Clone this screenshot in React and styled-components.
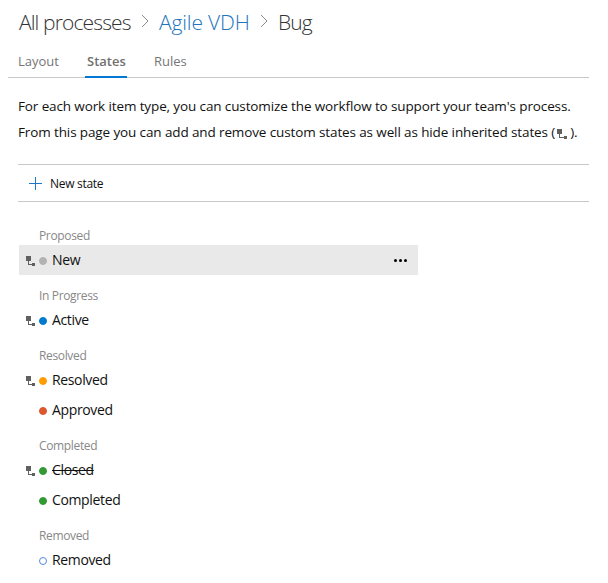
import React from "react";
import styled, { createGlobalStyle } from "styled-components";

const GlobalStyle = createGlobalStyle`
  * { box-sizing: border-box; }
  body { margin: 0; background: #fff; color: #111; font-family: "Open Sans", "Noto Sans", sans-serif; }
`;

const Page = styled.main`
  width: 608px;
  height: 583px;
  padding: 7px 19px 0 8px;
  overflow: hidden;
`;

const Breadcrumb = styled.nav`
  display: flex;
  align-items: center;
  height: 31px;
  padding: 0 0 1px 11px;
  font-size: 21px;
  font-weight: 300;
  line-height: 30px;
  white-space: nowrap;
`;

const Crumb = styled.span`
  width: ${(p) => p.$width}px;
  color: ${(p) => (p.$link ? "#2275bd" : "#333")};
  letter-spacing: ${(p) => p.$tracking}px;
`;

const Chevron = styled.svg`
  display: block;
  flex: none;
  width: 8px;
  height: 14px;
  margin: 0 10px 2px 10px;
`;

const Tabs = styled.div`
  display: flex;
  height: 40px;
  padding-left: 10px;
  border-bottom: 1px solid #c8c8c8;
`;

const Tab = styled.div`
  height: 40px;
  margin-right: ${(p) => p.$gap}px;
  padding: 12px ${(p) => (p.$active ? 2 : 0)}px 0;
  width: ${(p) => p.$width}px;
  border-bottom: ${(p) => (p.$active ? "2px solid #0078d4" : "none")};
  color: ${(p) => (p.$active ? "#707070" : "#767676")};
  font-size: 13px;
  font-weight: ${(p) => (p.$active ? 600 : 400)};
  line-height: 22px;
`;

const Body = styled.section`
  padding-left: 10px;
`;

const Intro = styled.div`
  padding-top: 15px;
  height: 86px;
  font-size: 13.5px;
  line-height: 26px;
  white-space: nowrap;
`;

const Line = styled.div`
  display: flex;
  letter-spacing: ${(p) => p.$tracking}px;
`;

const Toolbar = styled.div`
  display: flex;
  align-items: center;
  height: 38px;
  padding-left: 11px;
  border-top: 1px solid #c8c8c8;
  border-bottom: 1px solid #c8c8c8;
  font-size: 12px;
  letter-spacing: -0.3px;
`;

const Plus = styled.svg`
  width: 13px;
  height: 13px;
  margin-right: 8px;
`;

const StateList = styled.div`
  width: 400px;
  padding: 23px 0 0 1px;
`;

const Group = styled.section`
  margin-bottom: 10px;
`;

const Category = styled.div`
  height: 20px;
  padding-left: 20px;
  color: #888;
  font-size: 12px;
  line-height: 22px;
  letter-spacing: -0.35px;
`;

const StateRow = styled.div`
  display: flex;
  align-items: center;
  height: 30px;
  padding: 0 11px 0 7px;
  background: ${(p) => (p.$selected ? "#e9e9e9" : "transparent")};
`;

const IconSlot = styled.span`
  display: flex;
  width: 13px;
  padding-top: 1px;
`;

const InheritSvg = styled.svg`
  display: block;
  flex: none;
  width: ${(p) => p.$width}px;
  height: 10px;
  margin: ${(p) => p.$margin || 0};
`;

const Dot = styled.span`
  width: 8px;
  height: 8px;
  margin: 2px 5px 0 0;
  border: 1px solid ${(p) => p.$color};
  border-radius: 50%;
  background: ${(p) => (p.$hollow ? "#fff" : p.$color)};
`;

const Name = styled.span`
  flex: 1;
  font-size: 14px;
  line-height: 28px;
  letter-spacing: -0.36px;
`;

const Struck = styled.s`
  text-decoration-thickness: 1px;
`;

const MoreSvg = styled.svg`
  width: 13px;
  height: 3px;
`;

function Inherit({ margin, width = 9 }) {
  const foot = width - 3;
  return (
    <InheritSvg viewBox={`0 0 ${width} 10`} $width={width} $margin={margin} shapeRendering="crispEdges">
      <path d={`M0 0h5v5H0zM${foot} 7h3v3h-3z`} fill="#606060" />
      <path d={`M2 5h1v3h${foot - 3}v1H2z`} fill="#606060" />
    </InheritSvg>
  );
}

function Separator() {
  return (
    <Chevron viewBox="0 0 8 14" fill="none" stroke="#8a8a8a">
      <path d="M1 1l6 6-6 6" />
    </Chevron>
  );
}

const groups = [
  { title: "Proposed", states: [{ name: "New", color: "#b2b2b2", inherited: true, selected: true }] },
  { title: "In Progress", states: [{ name: "Active", color: "#007acc", inherited: true }] },
  {
    title: "Resolved",
    states: [
      { name: "Resolved", color: "#ff9d00", inherited: true },
      { name: "Approved", color: "#dc562e" },
    ],
  },
  {
    title: "Completed",
    states: [
      { name: "Closed", color: "#339933", inherited: true, hidden: true },
      { name: "Completed", color: "#339933" },
    ],
  },
  { title: "Removed", states: [{ name: "Removed", color: "#5688e0", hollow: true }] },
];

export default function App() {
  return (
    <Page>
      <GlobalStyle />
      <Breadcrumb>
        <Crumb $width={112} $tracking={-0.87}>All processes</Crumb>
        <Separator />
        <Crumb $width={91} $tracking={-0.15} $link>Agile VDH</Crumb>
        <Separator />
        <Crumb $width={36} $tracking={-0.9}>Bug</Crumb>
      </Breadcrumb>
      <Tabs>
        <Tab $width={42} $gap={25}>Layout</Tab>
        <Tab $width={42} $gap={27} $active>States</Tab>
        <Tab $width={34} $gap={0}>Rules</Tab>
      </Tabs>
      <Body>
        <Intro>
          <Line $tracking={-0.12}>
            For each work item type, you can customize the workflow to support your team's process.
          </Line>
          <Line $tracking={-0.12}>
            From this page you can add and remove custom states as well as hide inherited states (
            <Inherit width={10} margin="10px 3px 0 2px" />
            ).
          </Line>
        </Intro>
        <Toolbar>
          <Plus viewBox="0 0 13 13" shapeRendering="crispEdges">
            <path d="M6 0h1v13H6zM0 6h13v1H0z" fill="#1a78cc" />
          </Plus>
          New state
        </Toolbar>
        <StateList>
          {groups.map((g) => (
            <Group key={g.title}>
              <Category>{g.title}</Category>
              {g.states.map((s) => (
                <StateRow key={s.name} $selected={s.selected}>
                  <IconSlot>{s.inherited && <Inherit />}</IconSlot>
                  <Dot $color={s.color} $hollow={s.hollow} />
                  <Name>{s.hidden ? <Struck>{s.name}</Struck> : s.name}</Name>
                  {s.selected && (
                    <MoreSvg viewBox="0 0 13 3">
                      <circle cx="1.5" cy="1.5" r="1.5" />
                      <circle cx="6.5" cy="1.5" r="1.5" />
                      <circle cx="11.5" cy="1.5" r="1.5" />
                    </MoreSvg>
                  )}
                </StateRow>
              ))}
            </Group>
          ))}
        </StateList>
      </Body>
    </Page>
  );
}
